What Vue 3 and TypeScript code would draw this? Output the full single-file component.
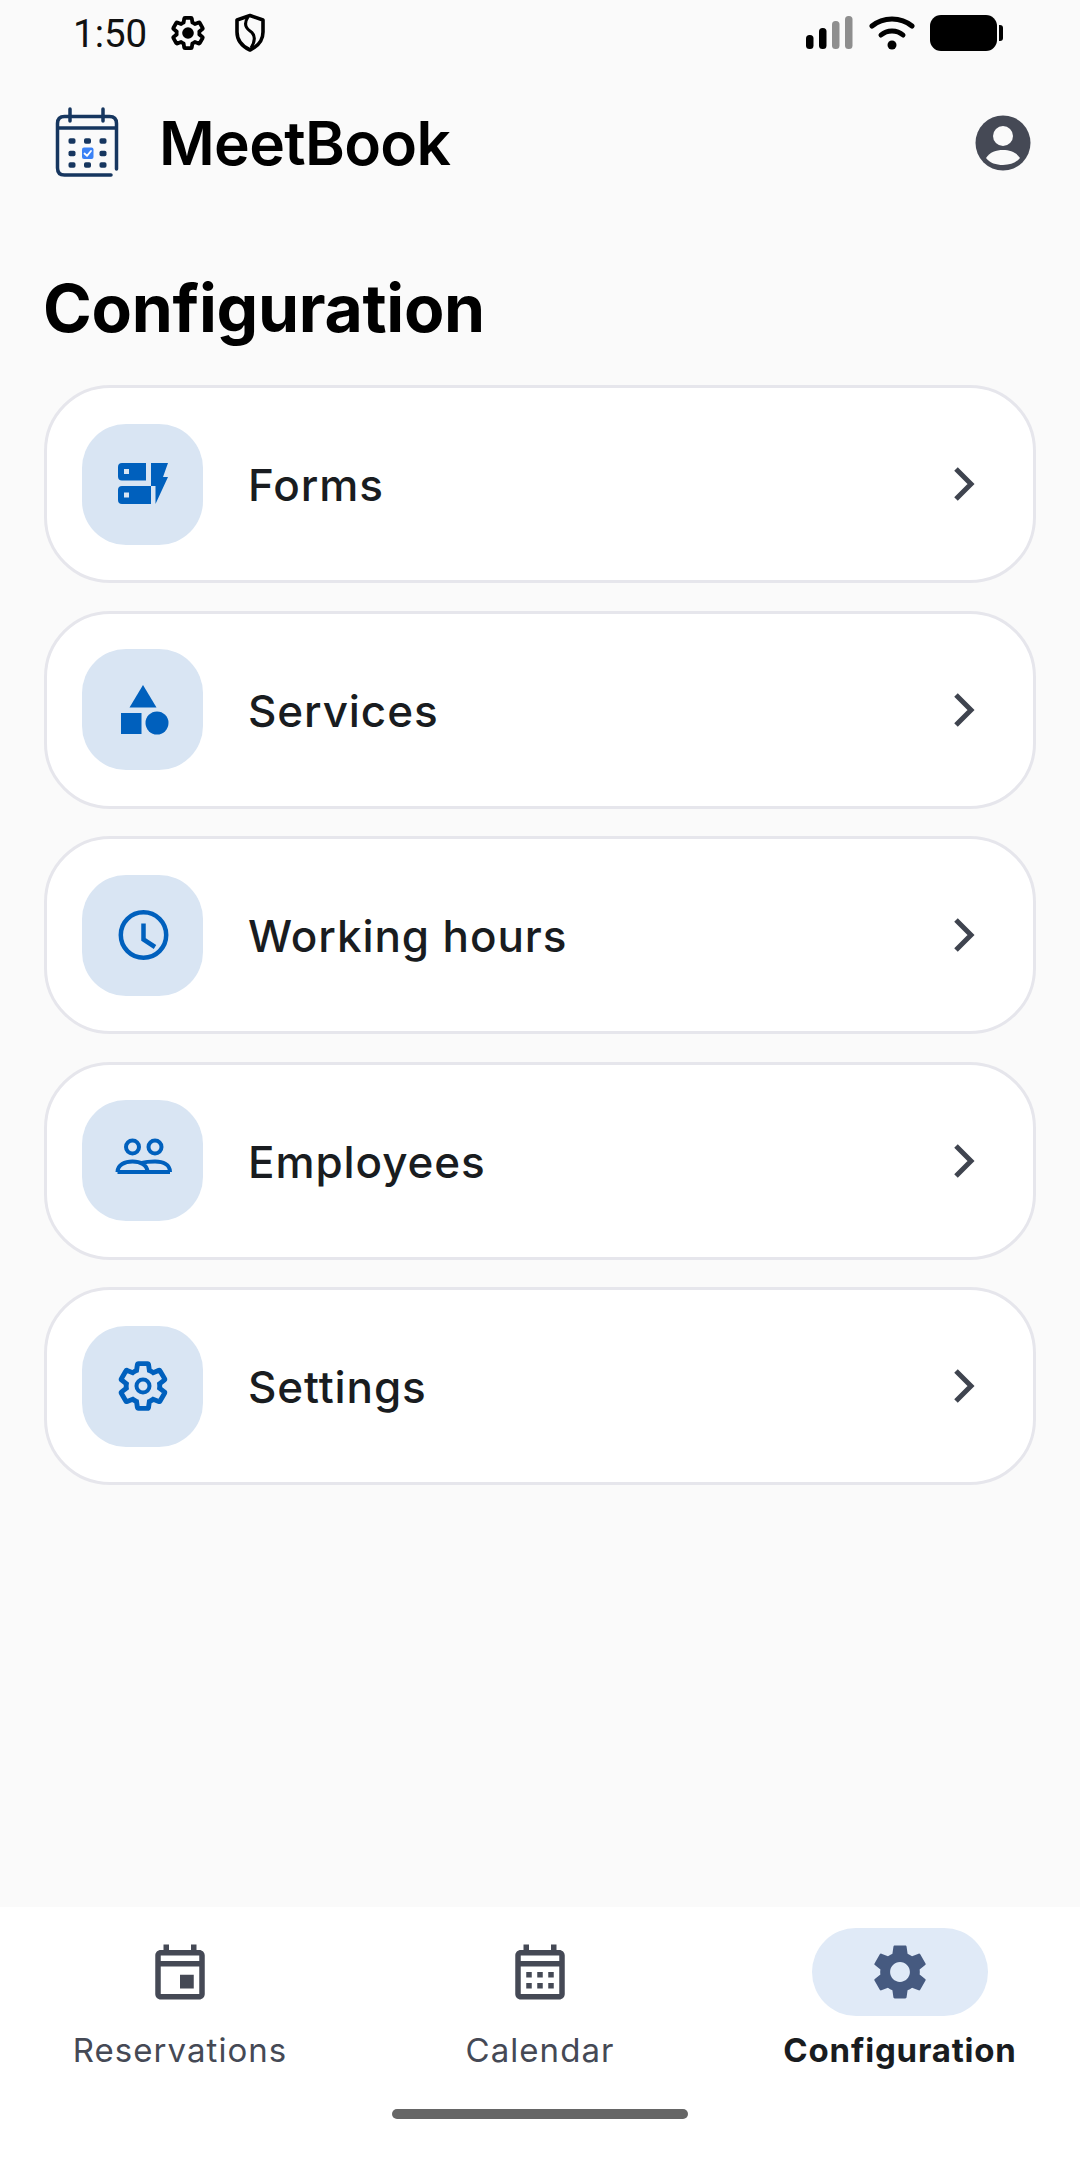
<script setup lang="ts">
const gearPath =
  'M19.14 12.94c.04-.3.06-.61.06-.94 0-.32-.02-.64-.07-.94l2.03-1.58c.18-.14.23-.41.12-.61l-1.92-3.32c-.12-.22-.37-.29-.59-.22l-2.39.96c-.5-.38-1.03-.7-1.62-.94l-.36-2.54c-.04-.24-.24-.41-.48-.41h-3.84c-.24 0-.43.17-.47.41l-.36 2.54c-.59.24-1.13.57-1.62.94l-2.39-.96c-.22-.08-.47 0-.59.22L2.74 8.87c-.12.21-.08.47.12.61l2.03 1.58c-.05.3-.09.63-.09.94s.02.64.07.94l-2.03 1.58c-.18.14-.23.41-.12.61l1.92 3.32c.12.22.37.29.59.22l2.39-.96c.5.38 1.03.7 1.62.94l.36 2.54c.05.24.24.41.48.41h3.84c.24 0 .44-.17.47-.41l.36-2.54c.59-.24 1.13-.56 1.62-.94l2.39.96c.22.08.47 0 .59-.22l1.92-3.32c.12-.22.07-.47-.12-.61l-2.01-1.58z'

const items = [
  { id: 'forms', label: 'Forms' },
  { id: 'services', label: 'Services' },
  { id: 'hours', label: 'Working hours' },
  { id: 'employees', label: 'Employees' },
  { id: 'settings', label: 'Settings' },
]

const logoDots = [
  [29, 42], [44.5, 42], [60, 42],
  [29, 54.500], [60, 54.500],
  [29, 66], [44.5, 66], [60, 66],
]
</script>

<template>
  <div class="screen">
    <div class="status-bar">
      <span class="time">1:50</span>
      <svg class="status-gear" width="40" height="40" viewBox="0 0 24 24">
        <path :d="gearPath" transform="translate(.6 .6) scale(.95)" fill="none" stroke="#000" stroke-width="2.400" stroke-linejoin="round" />
        <circle cx="12" cy="12" r="3.500" fill="#000" />
      </svg>
      <svg class="status-shield" width="32" height="40" viewBox="0 0 32 40">
        <path d="M16 2.500 L29 7 V19 C29 27.500 23.500 33.500 16 37 C8.500 33.500 3 27.500 3 19 V7 Z" fill="none" stroke="#000" stroke-width="3.600" stroke-linejoin="round" />
        <path d="M14 4 C10 10 11 14.500 16 18 C21 21.500 22 27 17 35" fill="none" stroke="#000" stroke-width="3" />
      </svg>
      <div class="status-right">
        <svg width="48" height="36" viewBox="0 0 48 36">
          <rect x="0" y="20" width="7.500" height="14" rx="3.500" fill="#000" />
          <rect x="13" y="13" width="7.500" height="21" rx="3.500" fill="#000" />
          <rect x="26" y="6" width="7.500" height="28" rx="3.500" fill="#8e8e8e" />
          <rect x="39" y="1" width="7.500" height="33" rx="3.500" fill="#8e8e8e" />
        </svg>
        <svg width="46" height="36" viewBox="0 0 46 36">
          <path d="M3 11 C14 1.500 32 1.500 43 11" fill="none" stroke="#000" stroke-width="5" stroke-linecap="round" />
          <path d="M12 20 C18 14.500 28 14.500 34 20" fill="none" stroke="#000" stroke-width="5" stroke-linecap="round" />
          <circle cx="23" cy="30" r="4.500" fill="#000" />
        </svg>
        <div class="battery">
          <div class="battery-body"></div>
          <div class="battery-nub"></div>
        </div>
      </div>
    </div>

    <header class="top-bar">
      <svg class="logo" width="88" height="88" viewBox="0 0 88 88" fill="none">
        <path d="M73.500 70 V24.500 Q73.500 17.500 66.500 17.500 H21.500 Q14.500 17.500 14.500 24.500 V69 Q14.500 76 21.500 76 H68" stroke="#16365f" stroke-width="3.500" stroke-linecap="round" />
        <path d="M14.500 29 H73.500" stroke="#16365f" stroke-width="3.500" />
        <path d="M27 10 V22 M60 10 V22" stroke="#16365f" stroke-width="3.500" stroke-linecap="round" />
        <rect v-for="d in logoDots" :key="d.join()" :x="d[0] - 3.500" :y="d[1] - 2.700" width="7" height="5.400" rx="1.800" fill="#16365f" />
        <rect x="39" y="48.500" width="11.500" height="11.500" rx="2" fill="#3b82f6" />
        <path d="M41.500 54.500 L44 56.800 L48 52" stroke="#fff" stroke-width="1.800" stroke-linecap="round" stroke-linejoin="round" />
      </svg>
      <span class="brand">MeetBook</span>
      <svg class="avatar" width="56" height="56" viewBox="0 0 56 56">
        <circle cx="28" cy="28" r="27.500" fill="#454955" />
        <circle cx="28" cy="21" r="10" fill="#fafafa" />
        <path d="M11 43 C15 37 21 35 28 35 C35 35 41 37 45 43 C41 48 35 50 28 50 C21 50 15 48 11 43 Z" fill="#fafafa" />
      </svg>
    </header>

    <h1 class="page-title">Configuration</h1>

    <main class="list">
      <div v-for="item in items" :key="item.id" class="card">
        <div class="card-icon">
          <svg width="66" height="66" viewBox="0 0 66 66">
            <g v-if="item.id === 'forms'" fill="#0060bd">
              <path d="M12 12 H36 V29.500 H12 Q8 29.500 8 25.500 V16 Q8 12 12 12 Z M14 18 V23 H19 V18 Z" fill-rule="evenodd" />
              <path d="M12 35 H41 V53 H12 Q8 53 8 49 V39 Q8 35 12 35 Z M14 41.500 V46.500 H19 V41.500 Z" fill-rule="evenodd" />
              <path d="M41 12 H58 L53 26 H58 L45.500 53 V35 H41 Z" />
            </g>
            <g v-else-if="item.id === 'services'" fill="#0060bd">
              <path d="M33 8 L46.500 30.500 H19.500 Z" />
              <rect x="11" y="36" width="20.500" height="21" />
              <circle cx="47" cy="46" r="11.500" />
            </g>
            <g v-else-if="item.id === 'hours'" fill="none" stroke="#0060bd" stroke-width="4.500">
              <circle cx="33.500" cy="33" r="22.700" />
              <path d="M33.500 21.500 V37.500 L45 45" />
            </g>
            <g v-else-if="item.id === 'employees'" fill="none" stroke="#0060bd" stroke-width="4">
              <circle cx="22.500" cy="19" r="6.500" />
              <circle cx="45" cy="19" r="6.500" />
              <path d="M7.500 44 H60 M7.500 44 C7.500 36.500 15 33.500 22.500 33.500 C30 33.500 37.500 36.500 37.500 44 M32 35 C35 34 39 33.500 45 33.500 C53 33.500 60 36.500 60 44" />
            </g>
            <g v-else>
              <path :d="gearPath" transform="translate(5 5) scale(2.330)" fill="none" stroke="#0060bd" stroke-width="2.100" stroke-linejoin="miter" />
              <circle cx="33" cy="33" r="6.500" fill="none" stroke="#0060bd" stroke-width="4" />
            </g>
          </svg>
        </div>
        <span class="card-label">{{ item.label }}</span>
        <svg class="chevron" width="26" height="36" viewBox="0 0 26 36">
          <path d="M5 3 L20 18 L5 33" fill="none" stroke="#3f444f" stroke-width="5" stroke-linejoin="miter" />
        </svg>
      </div>
    </main>

    <nav class="bottom-nav">
      <div class="tabs">
        <div class="tab">
          <div class="tab-icon">
            <svg width="66" height="66" viewBox="0 0 24 24">
              <path fill="#454955" d="M19 4h-1V2h-2v2H8V2H6v2H5c-1.110 0-1.990.9-1.990 2L3 20c0 1.100.890 2 2 2h14c1.100 0 2-.9 2-2V6c0-1.100-.9-2-2-2zm0 16H5V10h14v10zm0-12H5V6h14v2zm-2 5h-5v5h5v-5z" />
            </svg>
          </div>
          <span class="tab-label">Reservations</span>
        </div>
        <div class="tab">
          <div class="tab-icon">
            <svg width="66" height="66" viewBox="0 0 24 24">
              <path fill="#454955" d="M19 4h-1V2h-2v2H8V2H6v2H5c-1.110 0-1.990.9-1.990 2L3 20c0 1.100.890 2 2 2h14c1.100 0 2-.9 2-2V6c0-1.100-.9-2-2-2zm0 16H5V10h14v10zm0-12H5V6h14v2zM9 14H7v-2h2v2zm4 0h-2v-2h2v2zm4 0h-2v-2h2v2zm-8 4H7v-2h2v2zm4 0h-2v-2h2v2zm4 0h-2v-2h2v2z" />
            </svg>
          </div>
          <span class="tab-label">Calendar</span>
        </div>
        <div class="tab active">
          <div class="tab-icon">
            <svg width="66" height="66" viewBox="0 0 24 24">
              <path fill="#465a80" fill-rule="evenodd" :d="gearPath + 'M12 15.600c-1.980 0-3.600-1.620-3.600-3.600s1.620-3.600 3.600-3.600 3.600 1.620 3.600 3.600-1.620 3.600-3.600 3.600z'" />
            </svg>
          </div>
          <span class="tab-label">Configuration</span>
        </div>
      </div>
      <div class="home-bar"></div>
    </nav>
  </div>
</template>

<style>
html,
body {
  margin: 0;
  background: #fafafa;
}
</style>

<style scoped>
.screen {
  width: 1080px;
  height: 2160px;
  display: flex;
  flex-direction: column;
  background: #fafafa;
  font-family: Inter, 'Liberation Sans', sans-serif;
  color: #191c20;
  overflow: hidden;
}

.status-bar {
  height: 66px;
  display: flex;
  align-items: center;
  padding: 0 77px 0 73px;
  box-sizing: border-box;
}

.time {
  font-family: Roboto, sans-serif;
  font-size: 38.500px;
  color: #111;
}

.status-gear {
  margin-left: 21px;
}

.status-shield {
  margin-left: 26px;
}

.status-right {
  margin-left: auto;
  display: flex;
  align-items: center;
  gap: 15px;
}

.battery {
  display: flex;
  align-items: center;
  gap: 2px;
}

.battery-body {
  width: 67px;
  height: 36px;
  border-radius: 11px;
  background: #000;
}

.battery-nub {
  width: 4px;
  height: 16px;
  border-radius: 0 3px 3px 0;
  background: #000;
}

.top-bar {
  height: 154px;
  display: flex;
  align-items: center;
  padding: 0 49px 0 43px;
}

.brand {
  margin-left: 28px;
  font-size: 60.500px;
  font-weight: 600;
  letter-spacing: -0.700px;
  color: #000;
}

.avatar {
  margin-left: auto;
}

.page-title {
  margin: 0;
  height: 165px;
  padding: 44px 43px 0;
  box-sizing: border-box;
  font-size: 66px;
  line-height: 88px;
  font-weight: 700;
  letter-spacing: -0.300px;
  color: #000;
}

.list {
  flex: 1;
  display: flex;
  flex-direction: column;
  gap: 27.500px;
  padding: 0 44px;
}

.card {
  height: 198px;
  display: flex;
  align-items: center;
  box-sizing: border-box;
  padding: 0 56px 0 35px;
  background: #fff;
  border: 3px solid #e6e6ec;
  border-radius: 66px;
}

.card-icon {
  width: 121px;
  height: 121px;
  flex: none;
  display: flex;
  align-items: center;
  justify-content: center;
  border-radius: 44px;
  background: #d9e5f3;
}

.card-label {
  margin-left: 45px;
  padding-top: 2px;
  font-size: 44px;
  font-weight: 450;
  letter-spacing: 0.900px;
  color: #191c20;
}

.chevron {
  margin-left: auto;
}

.bottom-nav {
  height: 253px;
  flex: none;
  background: #fff;
  display: flex;
  flex-direction: column;
  align-items: center;
}

.tabs {
  width: 100%;
  display: grid;
  grid-template-columns: repeat(3, 1fr);
  padding-top: 21px;
}

.tab {
  display: flex;
  flex-direction: column;
  align-items: center;
}

.tab-icon {
  width: 176px;
  height: 88px;
  display: flex;
  align-items: center;
  justify-content: center;
  border-radius: 44px;
}

.tab.active .tab-icon {
  background: #e0eaf7;
}

.tab-label {
  margin-top: 12px;
  font-size: 33px;
  line-height: 44px;
  letter-spacing: 1.050px;
  color: #454955;
}

.tab.active .tab-label {
  font-weight: 700;
  color: #191c20;
  letter-spacing: 0.800px;
}

.home-bar {
  width: 296px;
  height: 10px;
  margin-top: 37px;
  border-radius: 5px;
  background: #666;
}
</style>
